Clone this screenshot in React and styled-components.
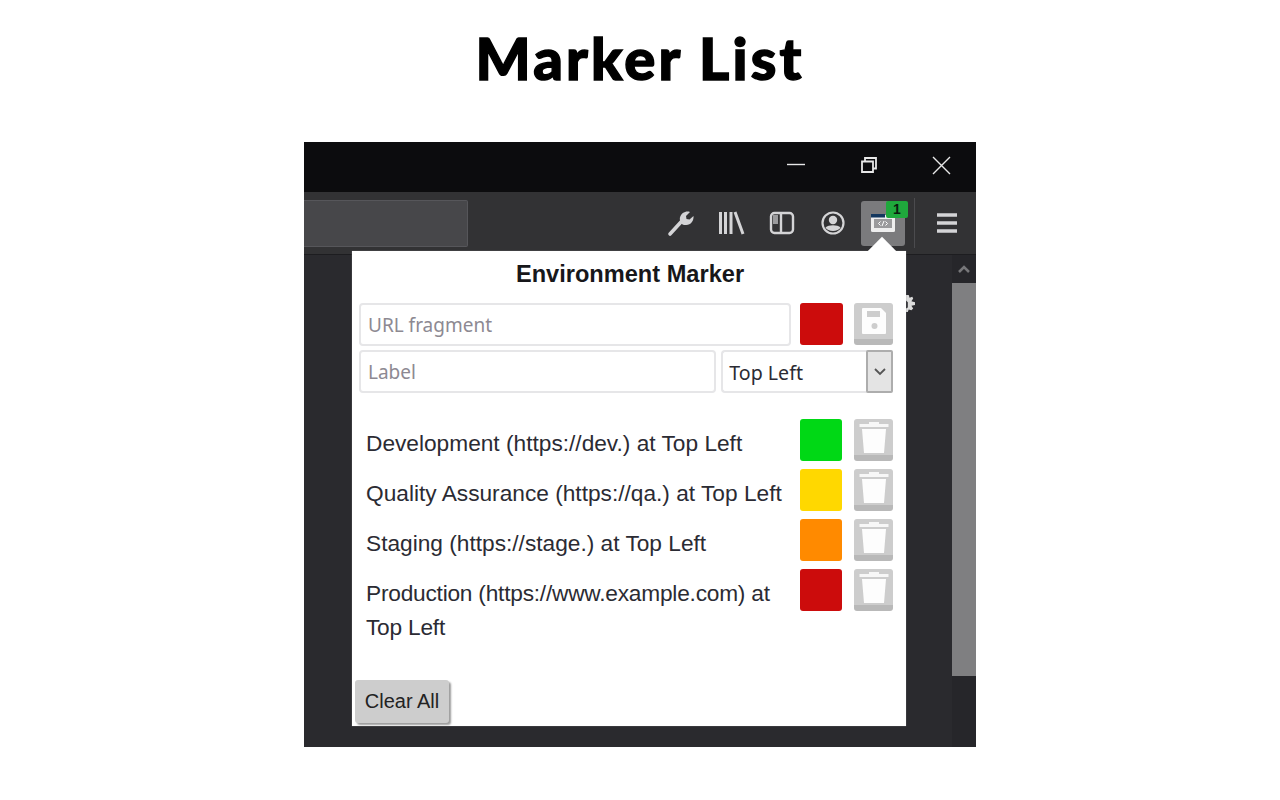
import styled, { createGlobalStyle } from 'styled-components'

const GlobalStyle = createGlobalStyle`
  html, body {
    margin: 0;
    padding: 0;
    background: #fff;
  }
  body {
    font-family: "Liberation Sans", Arial, sans-serif;
  }
`

const Page = styled.div`
  width: 1280px;
  height: 800px;
  overflow: hidden;
  display: flex;
  flex-direction: column;
  align-items: center;
`

const Title = styled.h1`
  margin: 0;
  height: 142px;
  padding-top: 23px;
  box-sizing: border-box;
  font-family: "Lato", "Liberation Sans", sans-serif;
  font-weight: 900;
  font-size: 58px;
  line-height: 70px;
  color: #000;
  letter-spacing: 3.1px;
  -webkit-text-stroke: 1.4px #000;
`

const Browser = styled.div`
  position: relative;
  width: 672px;
  height: 605px;
  display: flex;
  flex-direction: column;
  background: #2a2a2e;
`

const TitleBar = styled.div`
  height: 50px;
  flex: none;
  box-sizing: border-box;
  background: #0c0c0e;
  display: flex;
  justify-content: flex-end;
  align-items: center;
  padding: 0 12px 4px 0;
  gap: 26px;
`

const WindowButton = styled.svg`
  width: 46px;
  height: 20px;
  fill: none;
  stroke: #e8e8e8;
  stroke-width: 1.4;
`

const Toolbar = styled.div`
  height: 63px;
  flex: none;
  box-sizing: border-box;
  background: #323234;
  border-bottom: 1px solid #1d1d20;
  display: flex;
  align-items: center;
  padding-right: 15px;
`

const UrlBox = styled.div`
  width: 164px;
  height: 47px;
  box-sizing: border-box;
  background: #47474a;
  border: 1px solid #56565a;
  border-left: 0;
  border-radius: 0 2px 2px 0;
`

const ToolIcons = styled.div`
  margin-left: auto;
  display: flex;
  align-items: center;
  gap: 23px;
`

const ToolIcon = styled.svg`
  width: 28px;
  height: 28px;
  display: block;
  fill: none;
  stroke: #d4d4d6;
  stroke-width: 2;
`

const ExtensionButton = styled.div`
  position: relative;
  width: 44px;
  height: 45px;
  margin-left: -9px;
  border-radius: 3px;
  background: #7b7b7d;
  display: flex;
  align-items: center;
  justify-content: center;
`

const Badge = styled.span`
  position: absolute;
  top: 0;
  right: -3px;
  width: 22px;
  height: 17px;
  border-radius: 2px;
  background: #1fa83c;
  color: #0b1a0e;
  font-size: 14px;
  font-weight: 700;
  line-height: 17px;
  text-align: center;
`

const Divider = styled.div`
  width: 1px;
  height: 50px;
  margin: 0 18px 0 9px;
  background: #4b4b4e;
`

const Content = styled.div`
  flex: 1;
  display: flex;
  justify-content: flex-end;
`

const Scrollbar = styled.div`
  width: 24px;
  display: flex;
  flex-direction: column;
  background: #26262a;
`

const ScrollArrow = styled.div`
  height: 28px;
  flex: none;
  display: flex;
  align-items: center;
  justify-content: center;
`

const ScrollThumb = styled.div`
  height: 393px;
  background: #7f7f81;
`

const PageGear = styled.svg`
  position: absolute;
  top: 153px;
  left: 602px;
  width: 9px;
  height: 18px;
  fill: #dcdcdc;
`

const Popup = styled.div`
  position: absolute;
  top: 109px;
  left: 48px;
  width: 554px;
  height: 475px;
  box-sizing: border-box;
  background: #fff;
  padding: 7px 13px 3px 3px;
  display: flex;
  flex-direction: column;
  box-shadow: 0 0 1px #888;
`

const Arrow = styled.div`
  position: absolute;
  top: -10px;
  left: 520px;
  width: 20px;
  height: 20px;
  background: #fff;
  transform: rotate(45deg);
`

const Heading = styled.h2`
  position: relative;
  margin: 0;
  height: 45px;
  font-size: 23.6px;
  line-height: 32px;
  font-weight: 700;
  color: #17171a;
  text-align: center;
  padding-left: 12px;
`

const FormRow = styled.div`
  display: flex;
  align-items: flex-start;
  margin-left: 4px;
  margin-bottom: ${(p) => p.$mb || 0}px;
  gap: ${(p) => p.$gap || 9}px;
`

const TextField = styled.div`
  box-sizing: border-box;
  width: ${(p) => p.$w}px;
  height: 43px;
  border: 2px solid #e6e6e8;
  border-radius: 4px;
  padding-left: 7px;
  font-family: "Noto Sans", sans-serif;
  font-size: 19px;
  line-height: 41px;
  color: #8d8992;
`

const Swatch = styled.div`
  flex: none;
  width: ${(p) => p.$w || 42}px;
  height: 42px;
  border-radius: 3px;
  background: ${(p) => p.$color};
`

const IconButton = styled.div`
  flex: none;
  width: 39px;
  height: 42px;
  box-sizing: border-box;
  margin-left: 2px;
  border-radius: 3px;
  background: #cdcdcd;
  border-bottom: 6px solid #b9b9b9;
  display: flex;
  align-items: center;
  justify-content: center;
`

const GlyphSvg = styled.svg`
  width: 30px;
  height: 32px;
  display: block;
`

const SelectBox = styled.div`
  box-sizing: border-box;
  width: 172px;
  height: 43px;
  display: flex;
  border: 2px solid #e6e6e8;
  border-right: 0;
  border-radius: 4px;
  margin-left: -4px;
`

const SelectValue = styled.div`
  flex: 1;
  padding-left: 6px;
  font-family: "Noto Sans", sans-serif;
  font-size: 19.6px;
  line-height: 41px;
  color: #2b2b33;
`

const SelectArrow = styled.div`
  width: 27px;
  margin: -2px 0;
  box-sizing: border-box;
  background: #e4e4e4;
  border: 2px solid #adadad;
  border-radius: 2px;
  display: flex;
  align-items: center;
  justify-content: center;
`

const MarkerList = styled.div`
  margin-top: 26px;
  flex: 1;
  display: flex;
  flex-direction: column;
  gap: 8px;
`

const MarkerRow = styled.div`
  display: flex;
  align-items: flex-start;
  gap: 10px;
  padding-left: 11px;
`

const MarkerLabel = styled.div`
  width: 424px;
  flex: none;
  font-size: 22.7px;
  line-height: 34px;
  color: #2b2b33;
  padding-top: 7px;
  letter-spacing: ${(p) => (p.$tight ? '-0.22px' : '0')};
`

const ClearButton = styled.button`
  width: 94px;
  height: 43px;
  padding: 0;
  border: 0;
  border-radius: 3px;
  background: #cdcdcd;
  box-shadow: 2px 2px 2px #9c9c9c;
  font-family: "Liberation Sans", Arial, sans-serif;
  font-size: 20px;
  color: #222;
`

const markers = [
  { id: 'dev', label: 'Development (https://dev.) at Top Left', color: '#00d815' },
  { id: 'qa', label: 'Quality Assurance (https://qa.) at Top Left', color: '#ffd800' },
  { id: 'stage', label: 'Staging (https://stage.) at Top Left', color: '#ff8a00' },
  { id: 'prod', label: 'Production (https://www.example.com) at Top Left', color: '#cc0c0c', tight: true },
]

const SaveIcon = () => (
  <GlyphSvg viewBox="0 0 30 32">
    <path d="M4 3h18l5 5v20a1 1 0 0 1-1 1H4a1 1 0 0 1-1-1V4a1 1 0 0 1 1-1z" fill="#fdfdfd" />
    <rect x="8" y="6" width="13" height="6" fill="#cdcdcd" />
    <circle cx="15.500" cy="21" r="3" fill="#cdcdcd" />
  </GlyphSvg>
)

const TrashIcon = () => (
  <GlyphSvg viewBox="0 0 30 32">
    <path d="M0.500 3h29v3H0.500zM10 1h10v2H10z" fill="#f7f7f7" />
    <path d="M3 8h24l-2 24H5z" fill="#fdfdfd" />
  </GlyphSvg>
)

export default function App() {
  return (
    <Page>
      <GlobalStyle />
      <Title>Marker List</Title>
      <Browser>
        <TitleBar>
          <WindowButton viewBox="0 0 46 20">
            <path d="M13 9.500h18" />
          </WindowButton>
          <WindowButton viewBox="0 0 46 20">
            <path d="M16 6.500h11v10.500H16zM19 6.500V3h11v10.500h-3" strokeWidth="1.800" />
          </WindowButton>
          <WindowButton viewBox="0 0 46 20">
            <path d="M15 2l17 17M32 2L15 19" />
          </WindowButton>
        </TitleBar>
        <Toolbar>
          <UrlBox />
          <ToolIcons>
            <ToolIcon viewBox="0 0 28 28">
              <path d="M4 25L15 13" strokeWidth="3.600" strokeLinecap="round" />
              <path d="M14 8.500C15 4 20 1.500 24 3l-4 4 .5 3 3 .5 4-3.500c.5 5-3 9.500-8 9-2 0-3-.5-4-1.500-1.500-1.500-2-4-1.500-6.500z" fill="#d4d4d6" stroke="none" />
            </ToolIcon>
            <ToolIcon viewBox="0 0 28 28">
              <path d="M3.500 3v22M8.500 3v22M14 3v22M18 3l8 22" strokeWidth="3" />
            </ToolIcon>
            <ToolIcon viewBox="0 0 28 28">
              <rect x="3" y="4" width="22" height="20" rx="3.500" strokeWidth="2.400" />
              <path d="M13 4v20" strokeWidth="2.400" />
              <path d="M5 6h5v9H5z" fill="#9a9a9c" stroke="none" />
            </ToolIcon>
            <ToolIcon viewBox="0 0 28 28">
              <circle cx="14" cy="14" r="10.500" strokeWidth="2.200" />
              <circle cx="14" cy="11" r="4.200" fill="#d4d4d6" stroke="none" />
              <path d="M6.500 18.500c3-3 12-3 15 0-2 4.500-13 4.500-15 0z" fill="#d4d4d6" stroke="none" />
            </ToolIcon>
            <ExtensionButton>
              <svg width="26" height="22" viewBox="0 0 26 22">
                <rect x="1" y="3" width="24" height="17" rx="1.500" fill="#eeeeee" />
                <rect x="1" y="2" width="14" height="3.500" fill="#13375e" />
                <rect x="4" y="7" width="18" height="9" fill="#9a9a9c" />
                <path d="M10.500 9.500l-2 2 2 2M15.500 9.500l2 2-2 2M12 14l2-5" fill="none" stroke="#fff" strokeWidth="1" />
              </svg>
              <Badge>1</Badge>
            </ExtensionButton>
          </ToolIcons>
          <Divider />
          <ToolIcon viewBox="0 0 28 28">
            <path d="M4 6h20M4 14h20M4 22h20" strokeWidth="3.400" />
          </ToolIcon>
        </Toolbar>
        <Content>
          <Scrollbar>
            <ScrollArrow>
              <svg width="14" height="10" viewBox="0 0 14 10">
                <path d="M2 8l5-5 5 5" fill="none" stroke="#77777a" strokeWidth="2.500" />
              </svg>
            </ScrollArrow>
            <ScrollThumb />
          </Scrollbar>
        </Content>
        <PageGear viewBox="0 0 10 20">
          <path d="M0 0h3l1 3 3-1 1 2-2 3 4 1v3l-4 1 2 3-2 2-3-1-1 3H0v-4l2-1V8L0 6z" />
        </PageGear>
        <Popup>
          <Arrow />
          <Heading>Environment Marker</Heading>
          <FormRow $mb={4}>
            <TextField $w={433}>URL fragment</TextField>
            <Swatch $w={43} $color="#cc0c0c" />
            <IconButton>
              <SaveIcon />
            </IconButton>
          </FormRow>
          <FormRow $gap={9}>
            <TextField $w={358}>Label</TextField>
            <SelectBox>
              <SelectValue>Top Left</SelectValue>
              <SelectArrow>
                <svg width="14" height="9" viewBox="0 0 14 9">
                  <path d="M2 2l5 5 5-5" fill="none" stroke="#555" strokeWidth="1.800" />
                </svg>
              </SelectArrow>
            </SelectBox>
          </FormRow>
          <MarkerList>
            {markers.map((m) => (
              <MarkerRow key={m.id}>
                <MarkerLabel $tight={m.tight}>{m.label}</MarkerLabel>
                <Swatch $color={m.color} />
                <IconButton>
                  <TrashIcon />
                </IconButton>
              </MarkerRow>
            ))}
          </MarkerList>
          <ClearButton>Clear All</ClearButton>
        </Popup>
      </Browser>
    </Page>
  )
}
